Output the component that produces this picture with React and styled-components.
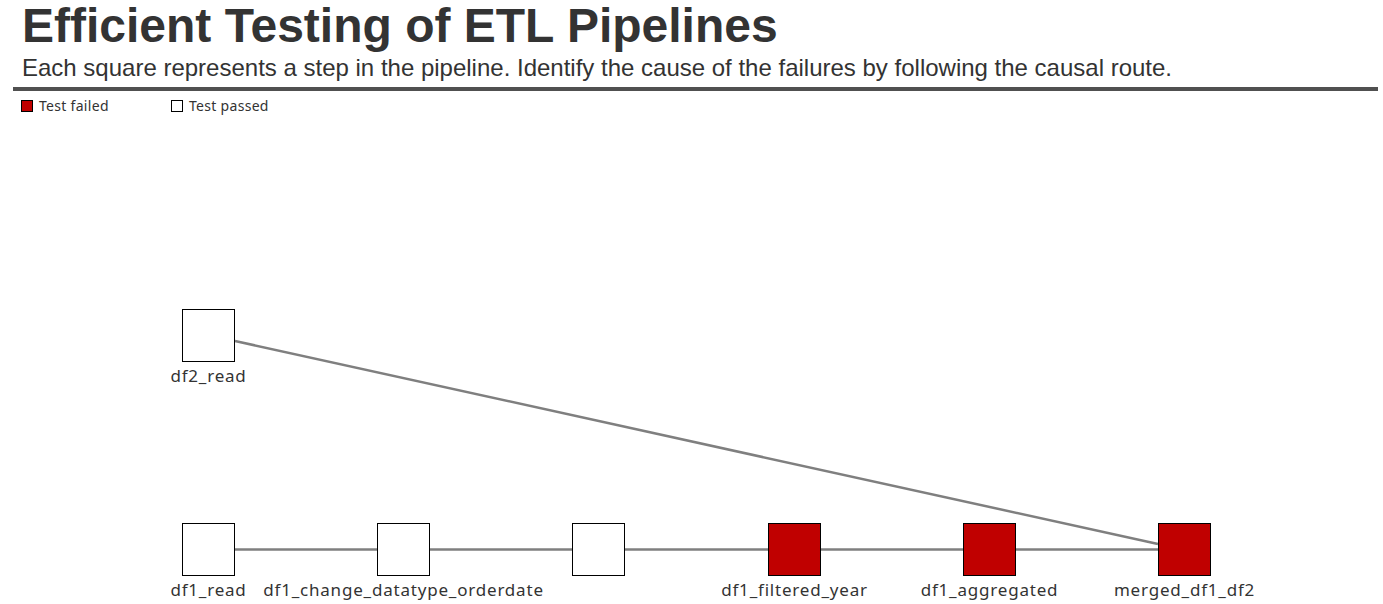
import React from "react";
import styled, { createGlobalStyle } from "styled-components";

const Global = createGlobalStyle`
  html, body { margin: 0; padding: 0; background: #ffffff; }
  body { width: 1383px; height: 604px; overflow: hidden; }
`;

const Page = styled.div`
  width: 1383px;
  height: 604px;
  display: flex;
  flex-direction: column;
  font-family: "Liberation Sans", Arial, sans-serif;
  color: #333333;
`;

const Header = styled.header`
  display: flex;
  flex-direction: column;
  padding: 0 5px 0 13px;
`;

const Title = styled.h1`
  margin: 0;
  padding-left: 9px;
  font-size: 48px;
  line-height: 52px;
  font-weight: 700;
  color: #333333;
`;

const Subtitle = styled.p`
  margin: 0;
  padding-left: 9px;
  font-size: 24px;
  line-height: 32px;
  color: #333333;
`;

const Rule = styled.div`
  height: 4px;
  margin-top: 3px;
  background: #505050;
`;

const Legend = styled.div`
  box-sizing: border-box;
  height: 29px;
  display: flex;
  align-items: flex-start;
  padding: 9px 0 0 21px;
  font-family: "Noto Sans", "Open Sans", sans-serif;
  font-size: 14px;
  letter-spacing: 0.3px;
  color: #333333;
`;

const LegendItem = styled.div`
  display: flex;
  align-items: center;
  gap: 6px;
  width: 150px;
  height: 12px;
  line-height: 12px;
`;

const Swatch = styled.span`
  flex: none;
  width: 10px;
  height: 10px;
  border: 1px solid #000;
  background: ${(p) => (p.$failed ? "#c00000" : "#ffffff")};
`;

const Canvas = styled.div`
  position: relative;
  flex: 1;
`;

const Edges = styled.svg`
  position: absolute;
  left: 0;
  top: 0;
  width: 100%;
  height: 100%;
`;

const Node = styled.div`
  position: absolute;
  width: 0;
  display: flex;
  flex-direction: column;
  align-items: center;
`;

const Box = styled.div`
  flex: none;
  width: 51px;
  height: 51px;
  border: 1px solid #000;
  background: ${(p) => (p.$failed ? "#c00000" : "#ffffff")};
`;

const Label = styled.div`
  flex: none;
  margin-top: 4px;
  white-space: nowrap;
  font-family: "Noto Sans", "Open Sans", sans-serif;
  font-size: 17px;
  letter-spacing: 0.8px;
  line-height: 20px;
  color: #333333;
`;

const TOP = 120;
const COLS = [182, 377, 572, 768, 963, 1158];

const nodes = [
  { name: "df2_read", x: COLS[0], y: 309, failed: false },
  { name: "df1_read", x: COLS[0], y: 523, failed: false },
  { name: "df1_change_datatype_orderdate", x: COLS[1], y: 523, failed: false },
  { name: "", x: COLS[2], y: 523, failed: false },
  { name: "df1_filtered_year", x: COLS[3], y: 523, failed: true },
  { name: "df1_aggregated", x: COLS[4], y: 523, failed: true },
  { name: "merged_df1_df2", x: COLS[5], y: 523, failed: true },
];

export default function App() {
  return (
    <>
      <Global />
      <Page>
        <Header>
          <Title>Efficient Testing of ETL Pipelines</Title>
          <Subtitle>
            Each square represents a step in the pipeline. Identify the cause of the failures by following the causal route.
          </Subtitle>
          <Rule />
        </Header>
        <Legend>
          <LegendItem>
            <Swatch $failed />
            Test failed
          </LegendItem>
          <LegendItem>
            <Swatch />
            Test passed
          </LegendItem>
        </Legend>
        <Canvas>
          <Edges viewBox="0 0 1383 484" preserveAspectRatio="xMinYMin">
            <line x1="235" y1={549.5 - TOP} x2="1158" y2={549.5 - TOP} stroke="#7f7f7f" strokeWidth="2.5" />
            <line x1="235" y1={341 - TOP} x2="1158" y2={544 - TOP} stroke="#7f7f7f" strokeWidth="2.5" />
          </Edges>
          {nodes.map((n, i) => (
            <Node key={i} style={{ left: n.x + 26.5, top: n.y - TOP }}>
              <Box $failed={n.failed} />
              {n.name && <Label>{n.name}</Label>}
            </Node>
          ))}
        </Canvas>
      </Page>
    </>
  );
}
